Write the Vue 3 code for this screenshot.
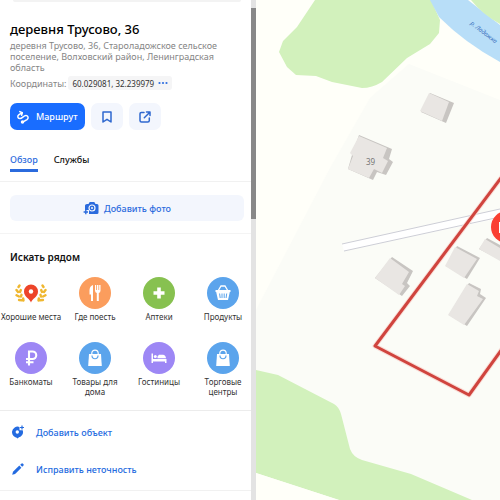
<script setup>
const categories = [
  { name: 'Хорошие места', icon: 'best', color: 'transparent' },
  { name: 'Где поесть', icon: 'food', color: '#fb9d5d' },
  { name: 'Аптеки', icon: 'plus', color: '#87c150' },
  { name: 'Продукты', icon: 'basket', color: '#5ba4ec' },
  { name: 'Банкоматы', icon: 'ruble', color: '#9d87f5' },
  { name: 'Товары для дома', icon: 'bag', color: '#5ba4ec' },
  { name: 'Гостиницы', icon: 'bed', color: '#9d87f5' },
  { name: 'Торговые центры', icon: 'bag', color: '#5ba4ec' },
]
</script>

<template>
  <div class="page">
    <aside class="sidebar">
      <div class="content">
        <div class="search-edge"></div>
        <header class="card">
          <h1>деревня Трусово, 36</h1>
          <p class="address">деревня Трусово, 36, Староладожское сельское поселение, Волховский район, Ленинградская область</p>
          <div class="coords">
            <span>Координаты:</span>
            <button class="chip" type="button">
              60.029081, 32.239979
              <svg width="10" height="4" viewBox="0 0 10 4" fill="#2f6fe0"><circle cx="1.5" cy="2" r="1.1" /><circle cx="5" cy="2" r="1.1" /><circle cx="8.500" cy="2" r="1.1" /></svg>
            </button>
          </div>
          <div class="actions">
            <button class="route" type="button">
              <svg width="14" height="14" viewBox="0 0 14 14" fill="none" stroke="#fff" stroke-width="1.5" stroke-linecap="round" stroke-linejoin="round">
                <path d="M5.800 3L3 4.600C1 6 1.600 8.800 4 8.600C6.200 8.300 7.800 5.400 10 5.500C12.400 5.700 12.800 8.300 11 9.600L7.500 11.700" />
                <path d="M3.800 1.600L6.300 2.700L5.600 5.200" />
                <circle cx="6.500" cy="12" r="1" fill="#fff" />
              </svg>
              Маршрут
            </button>
            <button class="square" type="button" aria-label="Сохранить">
              <svg width="12" height="14" viewBox="0 0 12 14" fill="none" stroke="#2f68cf" stroke-width="1.500"><path d="M2 2H10V12L6 9.300L2 12Z" stroke-linejoin="round" /></svg>
            </button>
            <button class="square" type="button" aria-label="Поделиться">
              <svg width="14" height="14" viewBox="0 0 14 14" fill="none" stroke="#2f68cf" stroke-width="1.500" stroke-linecap="round" stroke-linejoin="round"><path d="M6 2.500H3.300Q2 2.500 2 3.800V10.500Q2 12 3.500 12H9.800Q11.300 12 11.300 10.500V8M8.500 2H12V5.500M11.800 2.200L6.300 7.800" /></svg>
            </button>
          </div>
          <nav class="tabs">
            <a class="active" href="#overview">Обзор</a>
            <a href="#services">Службы</a>
          </nav>
        </header>

        <section class="photo">
          <button type="button">
            <svg width="16" height="14" viewBox="0 0 16 14">
              <path d="M4 3H5.500L6.700 1H11.300L12.500 3H14Q15.500 3 15.500 4.500V11.500Q15.500 13 14 13H6V9H2V4.500Q2 3 4 3Z" fill="#2b6bdd" />
              <circle cx="9" cy="7" r="3" fill="none" stroke="#f3f6fd" stroke-width="1.200" />
              <circle cx="9" cy="7" r="1" fill="#f3f6fd" />
              <path d="M2.800 8.800V13.200M.6 11H5" stroke="#2b6bdd" stroke-width="1.400" />
            </svg>
            Добавить фото
          </button>
        </section>

        <section class="nearby">
          <h2>Искать рядом</h2>
          <div class="grid">
            <a v-for="c in categories" :key="c.name" href="#search">
              <span class="disc" :style="{ background: c.color }">
                <svg width="32" height="32" viewBox="0 0 32 32">
                  <g v-if="c.icon === 'best'">
                    <g fill="none" stroke="#efb72f" stroke-width="2.400" stroke-linecap="round">
                      <path d="M4.500 8.500L3.500 10M1.500 13L3 15M5.800 13L5 15M1.500 18.200L4 19.500M6.500 17.800L6 19.500M4 23L7 23.300M8.200 21.500L8.500 23.500" />
                      <path d="M27.500 8.500L28.500 10M30.500 13L29 15M26.200 13L27 15M30.500 18.200L28 19.500M25.500 17.800L26 19.500M28 23L25 23.300M23.800 21.500L23.500 23.500" />
                    </g>
                    <path d="M16 25.500C15 21.800 9 20 9 14.500A7 7 0 0 1 23 14.500C23 20 17 21.800 16 25.500Z" fill="#ed4429" />
                    <circle cx="16" cy="14.500" r="2.200" fill="#fff" />
                  </g>
                  <g v-else-if="c.icon === 'food'" fill="#fff">
                    <path d="M14 8V24H12V17.500H10.500V13Q10.800 9 14 8Z" />
                    <path d="M16 8H17.200V13H18V8H19.400V13H20.200V8H21.500V13.500Q21.500 15.500 19.800 16V24H17.800V16Q16 15.500 16 13.500Z" />
                  </g>
                  <path v-else-if="c.icon === 'plus'" d="M16 10.500V21.500M10.500 16H21.500" stroke="#fff" stroke-width="3.600" />
                  <g v-else-if="c.icon === 'basket'">
                    <path d="M11 14L14 9H18L21 14" fill="none" stroke="#fff" stroke-width="1.300" />
                    <path d="M8.500 13H23.500V15H22.800L21 23H11L9.200 15H8.500Z" fill="#fff" />
                    <path d="M12.600 16.500L13.200 21M15 16.500V21M17.200 16.500V21M19.700 16.500L19.100 21" stroke="#5ba4ec" stroke-width="1" />
                  </g>
                  <path v-else-if="c.icon === 'ruble'" d="M14 23.500V9.500H17.500A3.700 3.700 0 0 1 17.500 17H11M11 20.200H18.500" fill="none" stroke="#fff" stroke-width="2.100" />
                  <g v-else-if="c.icon === 'bag'">
                    <path d="M12.800 12V11.300A3.200 3.200 0 0 1 19.200 11.300V12" fill="none" stroke="#fff" stroke-width="1.200" />
                    <path d="M10 12H22L22.800 24H9.200Z" fill="#fff" />
                    <path d="M13 13.500C13 17.800 19 17.800 19 13.500" fill="none" stroke="#5ba4ec" stroke-width="1.200" />
                  </g>
                  <g v-else fill="#fff">
                    <path d="M8.500 11.500H10V17H23.500V21H22V19.500H10V21H8.500Z" />
                    <circle cx="12.300" cy="14.600" r="1.500" />
                    <path d="M14.500 16.300V14.500L16 12.800H20Q22.500 13 23 16.300Z" />
                  </g>
                </svg>
              </span>
              <span class="label">{{ c.name }}</span>
            </a>
          </div>
        </section>

        <section class="edits">
          <a href="#add">
            <svg width="14" height="14" viewBox="0 0 14 14">
              <path d="M8.500 2A5.500 5.500 0 1 0 11.700 5.300H8.500ZM3.500 11L6.500 13.500L9.500 11Z" fill="#246be0" />
              <circle cx="6.300" cy="7" r="1.700" fill="#fff" />
              <path d="M11 .5V4.500M9 2.500H13" stroke="#246be0" stroke-width="1.200" />
            </svg>
            Добавить объект
          </a>
          <a href="#fix">
            <svg width="14" height="14" viewBox="0 0 14 14" fill="#246be0"><path d="M1.200 12.800L2 9.700L8.300 3.600L10.400 5.700L4.100 12Z" /><path d="M9.200 2.800L10.600 1.500Q11.300 1 12 1.700L12.500 2.200Q13 2.900 12.500 3.500L11.200 4.800Z" /></svg>
            Исправить неточность
          </a>
        </section>
      </div>
      <div class="scrollbar"><div class="thumb"></div></div>
    </aside>

    <main class="map">
      <svg viewBox="256 0 244 500" preserveAspectRatio="xMinYMin slice">
        <rect x="256" width="244" height="500" fill="#fffff9" />
        <path d="M409 64L500 100V500H256V310L330 168L370 98Z" fill="#fbfcf7" />
        <path d="M315 0L297 27L283 41L279 52L287 67L296 75L316 76L332 82L362 88Q372 88 382 82L407 58L430 44L439 33L440 20L431 0Z" fill="#d2f1bc" />
        <path d="M430 0H468L500 25V62Q465 43 439 17Z" fill="#b8def8" />
        <path d="M471 0H500V24Q482 14 471 0Z" fill="#d2f1bc" />
        <path d="M256 370L278 375L334 404Q339 407 341 414L350 449Q353 457 362 460L411 474L472 500H339L256 473Z" fill="#d2f1bc" />
        <path d="M256 473L339 500H256Z" fill="#fffff9" />
        <path d="M342 244L500 209V218L344 251Z" fill="#fff" />
        <path d="M342 244L500 209M344 251L500 217" stroke="#cdced6" stroke-width="1" />

        <g fill="#c8c5c2">
          <path d="M430 93L454 103L446 123L421 112Z" />
          <path d="M359 135L392 149L389 159L393 162L386 175L377 172L373 180L348 169L352 155Z" />
          <path d="M392 257L413 271L407 283L410 286L402 296L375 278Z" />
          <path d="M457 246L480 258L467 279L446 266Z" />
          <path d="M469 283L481 289L480 294L486 298L467 326L449 315Z" />
          <path d="M487 238L500 245V260L479 249Z" />
        </g>
        <g fill="#e9e6e3">
          <path d="M429 93L449 102L442 121L420 111Z" />
          <path d="M359 136L387 148L383 158L388 161L382 173L374 169L369 178L348 169L353 156L350 153Z" />
          <path d="M390 258L409 272L402 284L405 286L399 295L375 278Z" />
          <path d="M455 247L477 259L464 278L445 266Z" />
          <path d="M467 284L479 291L477 296L483 299L464 325L448 315Z" />
          <path d="M485 239L500 248V261L479 249Z" />
        </g>
        <text class="house" x="366" y="165">39</text>
        <text class="river" transform="translate(470 24) rotate(38)">р. Ладожка</text>
        <path d="M510 166L375 346L469 395L510 338" fill="none" stroke="#f9ded8" stroke-width="5" stroke-linejoin="round" />
        <path d="M510 166L375 346L469 395L510 338" fill="none" stroke="#d0443e" stroke-width="3" stroke-linejoin="round" />
        <circle cx="507" cy="227" r="16" fill="#fa4033" />
        <path d="M499.500 222V233" stroke="#fff" stroke-width="1" />
      </svg>
    </main>
  </div>
</template>

<style>
body { margin: 0; }
</style>

<style scoped>
.page {
  display: flex;
  height: 100vh;
  overflow: hidden;
  font-family: "Noto Sans", "Open Sans", sans-serif;
  font-size: 9px;
  line-height: 11px;
  color: #333;
  background: #fff;
}
button {
  font: inherit;
  border: 0;
  padding: 0;
  display: flex;
  align-items: center;
  cursor: pointer;
}
a { text-decoration: none; color: inherit; }
svg { display: block; flex: none; }
.sidebar { display: flex; flex: 0 0 256px; overflow: hidden; }
.content { flex: 1; min-width: 0; }
.search-edge { height: 2px; margin: 0 10px 0 13px; background: #f3f3f3; border-radius: 0 0 4px 4px; }
.card { padding: 18px 10px 0; border-bottom: 1px solid #f1f1f1; }
h1 { margin: 0 0 2px; font-size: 13px; line-height: 18px; font-weight: 500; color: #000; }
.address { margin: 0; color: #858585; }
.coords { display: flex; align-items: center; gap: 2px; margin-top: 3px; color: #858585; }
.chip { gap: 4px; height: 14px; padding: 0 4px; border-radius: 3px; background: #f5f5f6; color: #333; font-size: 8px; white-space: nowrap; }
.actions { display: flex; gap: 6px; margin-top: 13px; }
.route { gap: 6px; height: 27px; padding: 0 8px 0 6px; border-radius: 7px; background: #196dff; color: #fff; font-weight: 500; }
.square { justify-content: center; width: 32px; height: 27px; border-radius: 7px; background: #f3f6fd; }
.tabs { display: flex; gap: 16px; margin-top: 23px; padding-bottom: 9px; line-height: 14px; font-weight: 500; color: #111; }
.tabs a { padding-bottom: 2px; border-bottom: 3px solid transparent; }
.tabs .active { color: #2b6bdd; border-color: #2b6bdd; }
.photo { padding: 13px 7px 12px 10px; border-bottom: 1px solid #f4f4f4; }
.photo button { justify-content: center; gap: 5px; width: 100%; height: 26px; border-radius: 6px; background: #f3f6fd; color: #2b6bdd; font-weight: 500; }
.nearby { border-bottom: 1px solid #ececec; padding: 16px 0 13px; }
h2 { margin: 0 10px 12px; font-size: 10px; line-height: 15px; font-weight: 600; color: #111; }
.grid { display: grid; grid-template-columns: repeat(4, 64px); margin-left: -1px; row-gap: 14px; }
.grid a { display: flex; flex-direction: column; align-items: center; gap: 3px; min-height: 51px; }
.disc { border-radius: 50%; }
.label { font-size: 8px; line-height: 10px; text-align: center; max-width: 62px; }
.edits { display: flex; flex-direction: column; gap: 15px; padding: 10px 11px; border-bottom: 1px solid #f1f1f1; color: #246be0; font-weight: 500; }
.edits a { display: flex; align-items: center; gap: 11px; height: 22px; }
.scrollbar { flex: 0 0 5px; background: #e3e3e3; }
.thumb { height: 211px; margin-top: 8px; background: #888; }
.map { flex: 1; min-width: 0; overflow: hidden; background: #fbfcf7; }
.map svg { width: 100%; height: 100%; }
.house { font-size: 8px; fill: #777; }
.river { font-size: 6px; font-style: italic; fill: #3b72c0; }
</style>
